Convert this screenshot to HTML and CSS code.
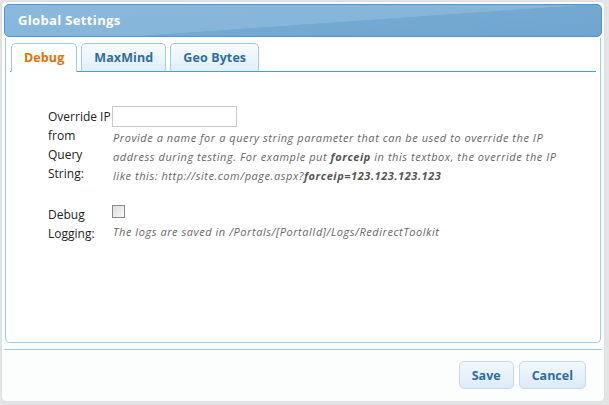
FILE: index.html
```html
<!DOCTYPE html>
<html>
<head>
<meta charset="utf-8">
<link rel="stylesheet" href="styles.css">
</head>
<body>
<div class="dialog">
  <div class="titlebar">Global Settings</div>
  <div class="panel">
    <ul class="tabs">
      <li class="tab active">Debug</li>
      <li class="tab">MaxMind</li>
      <li class="tab">Geo Bytes</li>
    </ul>
    <div class="form">
      <div class="row">
        <div class="label">Override IP from Query String:</div>
        <div class="field">
          <input class="text" type="text">
          <div class="help">Provide a name for a query string parameter that can be used to override the IP address during testing. For example put <b>forceip</b> in this textbox, the override the IP like this: http://site.com/page.aspx?<b>forceip=123.123.123.123</b></div>
        </div>
      </div>
      <div class="row">
        <div class="label">Debug Logging:</div>
        <div class="field">
          <span class="check"></span>
          <div class="help">The logs are saved in /Portals/[PortalId]/Logs/RedirectToolkit</div>
        </div>
      </div>
    </div>
  </div>
  <div class="footer">
    <button class="btn">Save</button>
    <button class="btn">Cancel</button>
  </div>
</div>
</body>
</html>
```

FILE: styles.css
```css
html, body {
  margin: 0;
  padding: 0;
}
body {
  background: #e4e4e4;
  font-family: "Open Sans", "DejaVu Sans", sans-serif;
  width: 609px;
  height: 405px;
  overflow: hidden;
}
.dialog {
  position: absolute;
  left: 1px;
  top: 1px;
  width: 604px;
  height: 401px;
  box-sizing: border-box;
  background: #fcfdfd;
  border: 1px solid #d8dfe5;
  border-radius: 5px;
  padding: 2px;
  display: flex;
  flex-direction: column;
}
.titlebar {
  height: 33px;
  box-sizing: border-box;
  border: 1px solid #4f95d3;
  border-radius: 5px;
  background: linear-gradient(176deg, #8ab9dd 0%, #86b5da 55%, #74a9d2 56%, #6fa5d0 100%);
  color: #fff;
  font-weight: bold;
  font-size: 13px;
  padding: 6px 0 0 13px;
  letter-spacing: 0.35px;
}
.panel {
  margin: 1px 1px 0 1px;
  height: 305px;
  box-sizing: border-box;
  border: 1px solid #a6c9e2;
  border-top: none;
  border-radius: 0 0 5px 5px;
  background: #fff;
  padding: 5px 4px 0 4px;
}
.tabs {
  list-style: none;
  margin: 0;
  padding: 0 0 0 1px;
  display: flex;
  gap: 4px;
  border-bottom: 1px solid #4f98d6;
  height: 28px;
}
.tab {
  box-sizing: border-box;
  height: 28px;
  padding: 5px 12px 0 12px;
  border: 1px solid #a6c9e2;
  border-bottom: none;
  border-radius: 5px 5px 0 0;
  background: linear-gradient(#f7fbfe, #dfeffc);
  color: #2e6e9e;
  font-weight: bold;
  font-size: 12.5px;
  letter-spacing: 0.1px;
}
.tab.active {
  background: #fdfefe;
  color: #e17009;
  height: 29px;
}
.form {
  padding: 34px 0 0 38px;
}
.row {
  display: flex;
  margin-bottom: 19px;
}
.label {
  width: 64px;
  font-size: 12px;
  line-height: 19px;
  color: #222;
  padding-top: 1px;
}
.field {
  flex: 1;
}
.text {
  display: block;
  width: 125px;
  height: 21px;
  box-sizing: border-box;
  border: 1px solid #c8c8c8;
  margin: 0;
  padding: 0;
}
.help {
  font-style: italic;
  font-size: 11px;
  line-height: 19px;
  letter-spacing: 0.55px;
  color: #666;
  margin-top: 1px;
  padding-left: 1px;
  max-width: 458px;
}
.help b {
  color: #555;
}
.check {
  display: block;
  width: 11px;
  height: 11px;
  border: 1px solid #8a8a8a;
  background: linear-gradient(135deg, #dcdcdc, #fafafa);
  margin: 1px 0 4px 0;
}
.footer {
  margin-top: 6px;
  border-top: 1px solid #a6c9e2;
  display: flex;
  justify-content: flex-end;
  gap: 5px;
  padding: 11px 16px 0 0;
}
.btn {
  font-family: "Open Sans", "DejaVu Sans", sans-serif;
  font-weight: bold;
  font-size: 12.5px;
  color: #2e6e9e;
  height: 28px;
  padding: 0 12px;
  border: 1px solid #c5dbec;
  border-radius: 5px;
  background: linear-gradient(#f2f8fd, #dcebf8);
}
```
